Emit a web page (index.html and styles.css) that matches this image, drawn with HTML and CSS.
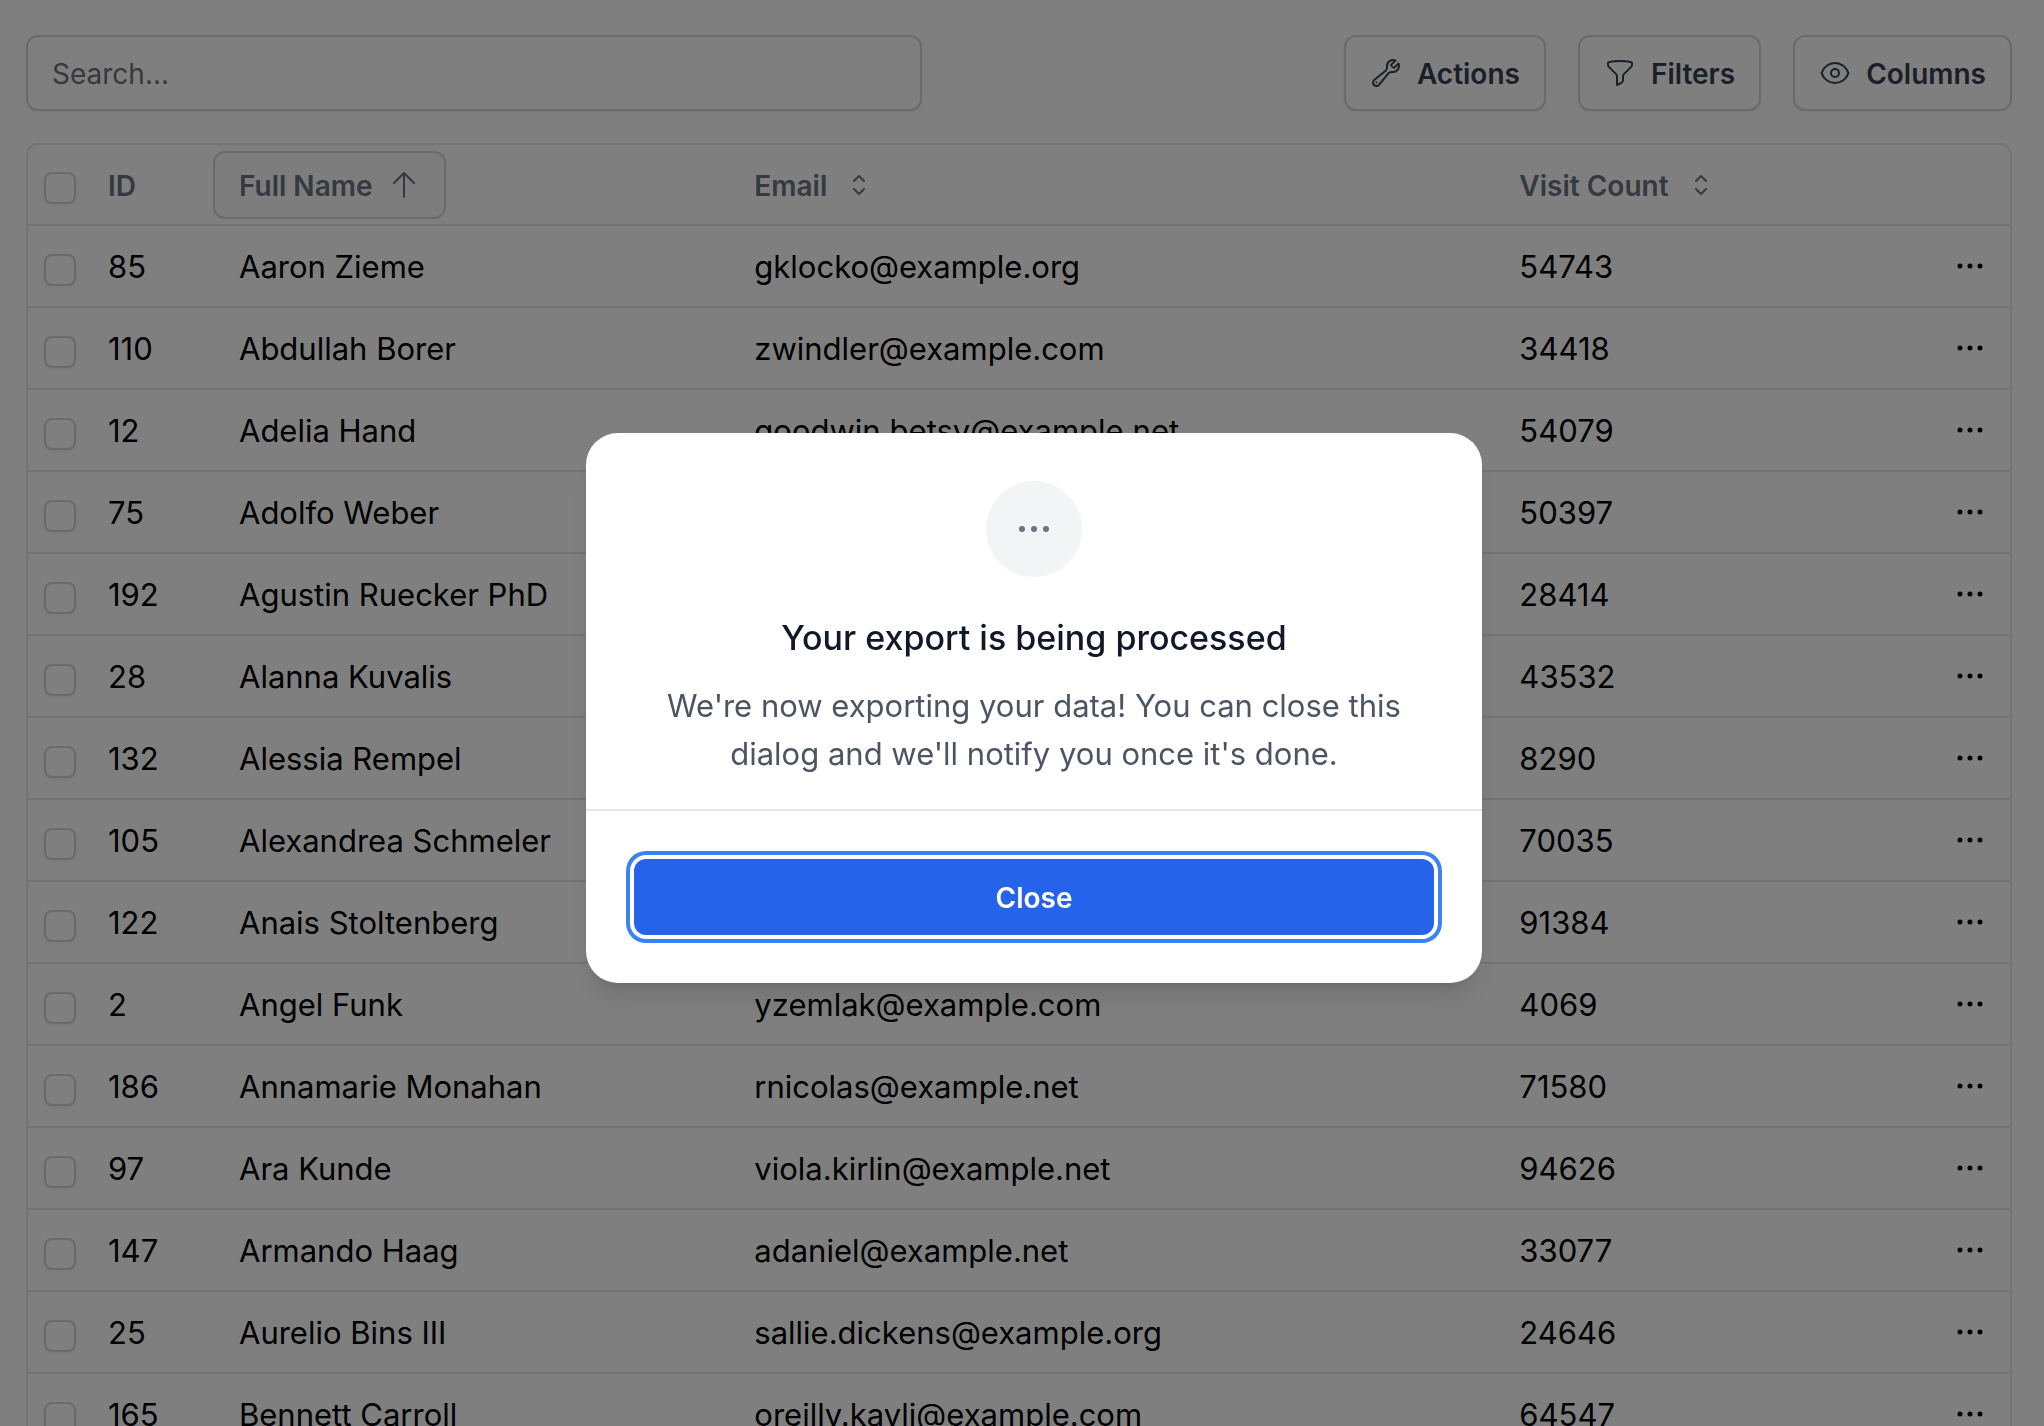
FILE: index.html
```html
<!DOCTYPE html>
<html lang="en">
<head>
	<meta charset="utf-8">
	<meta name="viewport" content="width=device-width, initial-scale=1">
	<title>Users</title>
	<link rel="stylesheet" href="styles.css">
</head>
<body>

<!-- Icons, used below -->
<svg class="sprite" aria-hidden="true">
	<symbol id="icon-wrench" viewBox="0 0 24 24">
		<path d="M21.75 6.75a4.5 4.5 0 0 1-4.884 4.484c-1.076-.091-2.264.071-2.95.904l-7.152 8.684a2.548 2.548 0 1 1-3.586-3.586l8.684-7.152c.833-.686.995-1.874.904-2.95a4.5 4.5 0 0 1 6.336-4.486l-3.276 3.276a3.004 3.004 0 0 0 2.25 2.25l3.276-3.276c.256.565.398 1.192.398 1.852Z"/>
		<path d="M4.867 19.125h.008v.008h-.008v-.008Z"/>
	</symbol>
	<symbol id="icon-funnel" viewBox="0 0 24 24">
		<path d="M12 3c2.755 0 5.455.232 8.083.678.533.09.917.556.917 1.096v1.044a2.25 2.25 0 0 1-.659 1.591l-5.432 5.432a2.25 2.25 0 0 0-.659 1.591v2.927a2.25 2.25 0 0 1-1.244 2.013L9.75 21v-6.568a2.25 2.25 0 0 0-.659-1.591L3.659 7.409A2.25 2.25 0 0 1 3 5.818V4.774c0-.54.384-1.006.917-1.096A48.32 48.32 0 0 1 12 3Z"/>
	</symbol>
	<symbol id="icon-eye" viewBox="0 0 24 24">
		<path d="M2.036 12.322a1.012 1.012 0 0 1 0-.639C3.423 7.51 7.36 4.5 12 4.5c4.638 0 8.573 3.007 9.963 7.178.07.207.07.431 0 .639C20.577 16.49 16.64 19.5 12 19.5c-4.638 0-8.573-3.007-9.963-7.178Z"/>
		<path d="M15 12a3 3 0 1 1-6 0 3 3 0 0 1 6 0Z"/>
	</symbol>
	<symbol id="icon-up" viewBox="0 0 24 24">
		<path d="M4.5 10.5 12 3m0 0 7.5 7.5M12 3v18"/>
	</symbol>
	<symbol id="icon-sort" viewBox="0 0 24 24">
		<path d="M8.25 15 12 18.75 15.75 15m-7.5-6L12 5.25 15.75 9"/>
	</symbol>
	<symbol id="icon-dots" viewBox="0 0 24 24">
		<path d="M6.75 12a.75.75 0 1 1-1.5 0 .75.75 0 0 1 1.5 0ZM12.75 12a.75.75 0 1 1-1.5 0 .75.75 0 0 1 1.5 0ZM18.75 12a.75.75 0 1 1-1.5 0 .75.75 0 0 1 1.5 0Z"/>
	</symbol>
</svg>

<main class="page">
	<div class="toolbar">
		<input class="search" type="search" placeholder="Search..." aria-label="Search">
		<div class="toolbar-buttons">
			<button class="btn" type="button"><svg class="icon"><use href="#icon-wrench"/></svg>Actions</button>
			<button class="btn" type="button"><svg class="icon"><use href="#icon-funnel"/></svg>Filters</button>
			<button class="btn" type="button"><svg class="icon"><use href="#icon-eye"/></svg>Columns</button>
		</div>
	</div>

	<div class="table-frame">
		<table>
			<colgroup>
				<col class="col-check">
				<col class="col-id">
				<col class="col-name">
				<col class="col-email">
				<col>
				<col class="col-menu">
			</colgroup>
			<thead>
				<tr>
					<th class="check"><input type="checkbox" aria-label="Select all"></th>
					<th><span class="heading">ID</span></th>
					<th><button class="heading sorted" type="button">Full Name<svg class="icon"><use href="#icon-up"/></svg></button></th>
					<th><button class="heading" type="button">Email<svg class="icon"><use href="#icon-sort"/></svg></button></th>
					<th><button class="heading" type="button">Visit Count<svg class="icon"><use href="#icon-sort"/></svg></button></th>
					<th></th>
				</tr>
			</thead>
			<tbody id="rows"></tbody>
		</table>
	</div>
</main>

<div class="overlay">
	<div class="dialog" role="dialog" aria-modal="true" aria-labelledby="dialog-title">
		<div class="dialog-body">
			<div class="dialog-icon"><svg class="icon"><use href="#icon-dots"/></svg></div>
			<h2 id="dialog-title">Your export is being processed</h2>
			<p>We're now exporting your data! You can close this dialog and we'll notify you once it's done.</p>
		</div>
		<div class="dialog-footer">
			<button class="btn-primary" type="button">Close</button>
		</div>
	</div>
</div>

<script src="script.js"></script>
</body>
</html>
```
FILE: styles.css
```css
* {
	box-sizing: border-box;
}

body {
	margin: 0;
	overflow: hidden; /* the dialog is open */
	font-family: Inter, "Liberation Sans", sans-serif;
	font-size: 31px;
	line-height: 48px;
	color: black;
	background: white;
}

button, input {
	font: inherit;
	color: inherit;
}

button {
	cursor: pointer;
}

.sprite {
	display: none;
}

.icon {
	width: 32px;
	height: 32px;
	flex: none;
	fill: none;
	stroke: currentColor;
	stroke-width: 1.5;
	stroke-linecap: round;
	stroke-linejoin: round;
}

.page {
	padding: 35px 32px 32px 26px;
}

/* Search and buttons */
.toolbar {
	display: flex;
	justify-content: space-between;
	gap: 32px;
	margin-bottom: 32px;
}

.search {
	flex: 0 1 896px;
	min-width: 0;
	height: 76px;
	padding: 2px 24px 0;
	border: 2px solid #d1d5db;
	border-radius: 12px;
	background: white;
	box-shadow: 0 2px 4px rgba(0, 0, 0, 0.05);
	font-size: 28px;
	appearance: none;
}

.search::placeholder {
	color: #6b7280;
}

.toolbar-buttons {
	display: flex;
	gap: 32px;
}

.btn {
	display: flex;
	align-items: center;
	gap: 15px;
	height: 76px;
	padding: 2px 24px 0;
	border: 2px solid #d1d5db;
	border-radius: 12px;
	background: white;
	box-shadow: 0 2px 4px rgba(0, 0, 0, 0.05);
	font-size: 28px;
	font-weight: 600;
	color: #374151;
}

/* Table */
.table-frame {
	border: 2px solid #e5e7eb;
	border-radius: 12px;
}

table {
	width: 100%;
	table-layout: fixed;
	border-collapse: separate;
	border-spacing: 0;
}

.col-check {
	width: 54px;
}

.col-id {
	width: 131px;
}

.col-name {
	width: 26%;
}

.col-email {
	width: 38.6%;
}

.col-menu {
	width: 80px;
}

th, td {
	height: 82px;
	padding: 0;
	border-bottom: 2px solid #e5e7eb;
	text-align: left;
	white-space: nowrap;
}

th {
	height: 81px;
}

td {
	padding: 2px 0 0 26px;
}

.check {
	padding: 8px 0 0 16px;
}

th.check {
	padding-top: 6px;
}

.check input {
	display: block;
	width: 32px;
	height: 32px;
	margin: 0;
	border: 2px solid #d1d5db;
	border-radius: 8px;
	background: white;
	box-shadow: 0 2px 4px rgba(0, 0, 0, 0.05);
	appearance: none;
}

.heading {
	display: inline-flex;
	align-items: center;
	gap: 16px;
	height: 68px;
	padding: 2px 24px 0;
	border: 2px solid transparent;
	border-radius: 12px;
	background: none;
	font-size: 28px;
	font-weight: 600;
	color: #6b7280;
	vertical-align: middle;
}

/* keep the icons on the button's middle, the labels sit a little lower */
.btn .icon, .heading .icon {
	margin-bottom: 2px;
}

.sorted {
	border-color: #d1d5db;
	background: #f8fbf9;
}

td:last-child {
	padding: 0 0 0 20px;
}

.menu {
	display: block;
	width: 40px;
	height: 40px;
	padding: 0;
	border: 0;
	background: none;
}

.menu .icon {
	display: block;
	width: 40px;
	height: 40px;
}

/* Export dialog */
.overlay {
	position: fixed;
	inset: 0;
	display: flex;
	align-items: center;
	justify-content: center;
	padding: 0 0 10px 24px;
	background: rgba(0, 0, 0, 0.5);
}

.dialog {
	width: 896px;
	max-width: 100%;
	border-radius: 32px;
	background: white;
	box-shadow: 0 20px 25px -5px rgba(0, 0, 0, 0.1), 0 8px 10px -6px rgba(0, 0, 0, 0.1);
	text-align: center;
}

.dialog-body {
	padding: 48px 48px 31px;
}

.dialog-icon {
	display: flex;
	align-items: center;
	justify-content: center;
	width: 96px;
	height: 96px;
	margin: 0 auto 41px;
	border-radius: 50%;
	background: #f3f4f6;
	color: #6b7280;
}

.dialog-icon .icon {
	width: 48px;
	height: 48px;
}

.dialog h2 {
	margin: 0 0 24px;
	font-size: 34px;
	font-weight: 500;
	line-height: 40px;
	color: #111827;
}

.dialog p {
	margin: 0;
	padding: 0 32px;
	color: #4b5563;
}

.dialog-footer {
	padding: 48px;
	border-top: 2px solid #e5e7eb;
}

.btn-primary {
	display: block;
	width: 100%;
	height: 76px;
	padding: 2px 24px 0;
	border: 0;
	border-radius: 12px;
	background: #2563eb;
	box-shadow: 0 0 0 4px white, 0 0 0 8px #3b82f6;
	font-size: 28px;
	font-weight: 600;
	color: white;
}
```
FILE: script.js
```js
const users = [
	[85, 'Aaron Zieme', 'gklocko@example.org', 54743],
	[110, 'Abdullah Borer', 'zwindler@example.com', 34418],
	[12, 'Adelia Hand', 'goodwin.betsy@example.net', 54079],
	[75, 'Adolfo Weber', '', 50397],
	[192, 'Agustin Ruecker PhD', '', 28414],
	[28, 'Alanna Kuvalis', '', 43532],
	[132, 'Alessia Rempel', '', 8290],
	[105, 'Alexandrea Schmeler', '', 70035],
	[122, 'Anais Stoltenberg', '', 91384],
	[2, 'Angel Funk', 'yzemlak@example.com', 4069],
	[186, 'Annamarie Monahan', 'rnicolas@example.net', 71580],
	[97, 'Ara Kunde', 'viola.kirlin@example.net', 94626],
	[147, 'Armando Haag', 'adaniel@example.net', 33077],
	[25, 'Aurelio Bins III', 'sallie.dickens@example.org', 24646],
	[165, 'Bennett Carroll', 'oreilly.kayli@example.com', 64547]
];

document.getElementById('rows').innerHTML = users.map(([id, name, email, visits]) => `
	<tr>
		<td class="check"><input type="checkbox" aria-label="Select ${name}"></td>
		<td>${id}</td>
		<td>${name}</td>
		<td>${email}</td>
		<td>${visits}</td>
		<td><button class="menu" type="button" aria-label="Actions for ${name}"><svg class="icon"><use href="#icon-dots"/></svg></button></td>
	</tr>`).join('');
```
